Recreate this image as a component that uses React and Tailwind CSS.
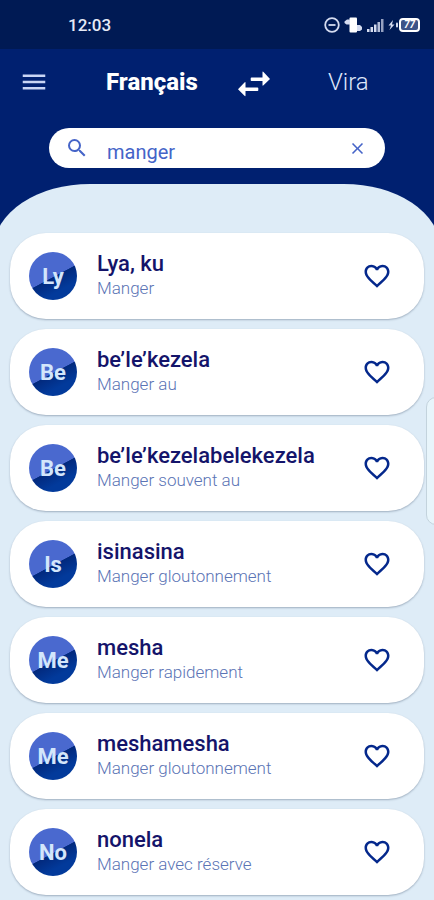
import { useState } from "react";
import { MdMenu, MdSearch, MdClose, MdFavoriteBorder, MdFavorite } from "react-icons/md";

const entries = [
  { id: 1, badge: "Ly", word: "Lya, ku", meaning: "Manger" },
  { id: 2, badge: "Be", word: "be’le’kezela", meaning: "Manger au" },
  { id: 3, badge: "Be", word: "be’le’kezelabelekezela", meaning: "Manger souvent au" },
  { id: 4, badge: "Is", word: "isinasina", meaning: "Manger gloutonnement" },
  { id: 5, badge: "Me", word: "mesha", meaning: "Manger rapidement" },
  { id: 6, badge: "Me", word: "meshamesha", meaning: "Manger gloutonnement" },
  { id: 7, badge: "No", word: "nonela", meaning: "Manger avec réserve" },
];

function StatusIcons() {
  return (
    <div className="flex items-center gap-1 text-[#d5dcf0]">
      {/* Do not disturb */}
      <svg className="h-4 w-4" viewBox="0 0 16 16" fill="none" stroke="currentColor" strokeWidth="1.8">
        <circle cx="8" cy="8" r="6.8" />
        <path d="M4.5 8h7" />
      </svg>
      {/* Vibrating phone */}
      <svg className="h-4 w-[19px]" viewBox="0 0 19 16">
        <rect x="5.5" y="0.5" width="7.5" height="15" rx="1" fill="#fff" />
        <path d="M6 2.5H3L0.5 4.500v1.500L2.500 7.500h3.500zM13 8h3L18 10v2.500L16 14H13z" fill="currentColor" />
      </svg>
      {/* Signal strength */}
      <svg className="h-4 w-[17px]" viewBox="0 0 17 16" fill="currentColor">
        <rect x="0" y="12" width="2.5" height="3" />
        <rect x="3.500" y="10" width="2.500" height="5" />
        <rect x="7" y="7.500" width="2.500" height="7.500" />
        <rect x="10.500" y="5" width="2.500" height="10" opacity="0.85" />
        <rect x="14" y="2" width="2.500" height="13" opacity="0.7" />
      </svg>
      {/* Charging battery */}
      <div className="flex items-center">
        <svg className="h-4 w-[11px]" viewBox="0 0 11 16" fill="currentColor">
          <path d="M5 3L0.500 8.500H3L1.500 13L6.500 7.500H4z" />
          <rect x="8" y="5.500" width="2" height="5" rx="1" />
        </svg>
        <span className="flex h-[14px] w-[21px] items-center justify-center rounded border-2 border-current bg-[#3d5488] text-[10px] leading-none font-bold text-white italic">
          77
        </span>
      </div>
    </div>
  );
}

function EntryCard({ entry }) {
  const [liked, setLiked] = useState(false);
  const Heart = liked ? MdFavorite : MdFavoriteBorder;
  return (
    <li className="flex h-[86px] items-center rounded-[36px] bg-white pr-8 pl-[19px] shadow-[0_1px_2px_rgba(40,60,90,0.35)]">
      <span className="flex size-12 shrink-0 items-center justify-center rounded-full bg-[linear-gradient(152deg,#4a69cf_0%,#4a69cf_51%,#02297d_52%,#023a9b_75%,#023a9b_100%)] text-[22px] font-bold text-[#d3e6fb]">
        {entry.badge}
      </span>
      <div className="min-w-0 flex-1 pl-5">
        <h2 className="text-[22px] leading-6 font-medium text-[#14146a]">{entry.word}</h2>
        <p className="text-[17px] leading-6 font-light text-[#5b74b5]">{entry.meaning}</p>
      </div>
      <button
        type="button"
        aria-label={`Favori : ${entry.word}`}
        aria-pressed={liked}
        onClick={() => setLiked(!liked)}
        className="text-[#04288c]"
      >
        <Heart className="size-[30px]" />
      </button>
    </li>
  );
}

export default function App() {
  const [query, setQuery] = useState("manger");
  return (
    <div className="relative flex min-h-screen flex-col overflow-hidden bg-[#002070] font-['Roboto',sans-serif]">
      <div className="flex h-[49px] items-center justify-between bg-[#001a54] pr-[14px] pl-[68px]">
        <span className="pt-0.5 text-[17px] font-medium text-[#e6eaf6]">12:03</span>
        <StatusIcons />
      </div>

      <header className="px-[19px] pt-[13px]">
        <nav className="grid grid-cols-[30px_13fr_32px_10fr] items-center">
          <button type="button" aria-label="Menu" className="text-[#c9d5f5]">
            <MdMenu className="size-[30px]" />
          </button>
          <button type="button" className="justify-self-end pr-10 text-2xl leading-10 font-extrabold text-white">
            Français
          </button>
          <button type="button" aria-label="Inverser les langues" className="pt-1 text-white">
            <svg className="h-[26px] w-8" viewBox="0 0 32 26" fill="currentColor">
              <path d="M13.500 6.500h11V1.200q0-1.200 1-.3L32 8l-6.500 6.300q-1 .9-1-.3V10H13.500q-.8 0-.8-.8V7.300q0-.8.8-.8z" />
              <path d="M19.500 16.500H7.500V11.700q0-1.200-1-.3L0 18.300l6.500 6.500q1 .9 1-.3V20h12q.8 0 .8-.8v-1.900q0-.8-.8-.8z" />
            </svg>
          </button>
          <button type="button" className="justify-self-center pl-3 text-2xl leading-10 font-light text-[#dfe6fa]">
            Vira
          </button>
        </nav>

        <div className="mx-[30px] mt-[26px] flex h-10 items-center rounded-full bg-white pr-[18px] pl-4 text-[#4564c8]">
          <MdSearch className="size-6 shrink-0" />
          <input
            type="text"
            aria-label="Rechercher"
            value={query}
            onChange={(e) => setQuery(e.target.value)}
            className="h-10 min-w-0 flex-1 bg-transparent pt-2 pl-[18px] text-xl outline-none"
          />
          <button type="button" aria-label="Effacer" onClick={() => setQuery("")}>
            <MdClose className="size-[19px]" />
          </button>
        </div>
      </header>

      <main className="-mx-1.5 mt-4 flex-1 rounded-t-[96px_64px] bg-[#deecf7] px-4 pt-[49px] pb-1">
        <ul className="flex flex-col gap-2.5">
          {entries.map((entry) => (
            <EntryCard key={entry.id} entry={entry} />
          ))}
        </ul>
      </main>

      {/* Edge panel handle that floats over the list */}
      <div className="absolute top-[397px] -right-3 h-32 w-5 rounded-xl border border-[#c3d3dd] bg-[#e8f5fb]" />
    </div>
  );
}
